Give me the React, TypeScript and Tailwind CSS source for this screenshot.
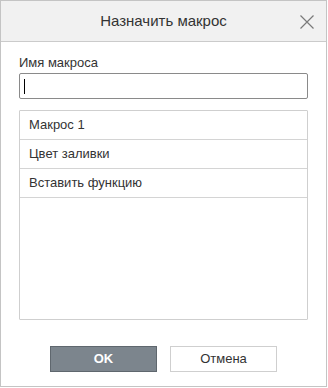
export default function App() {
  const items = ["Макрос 1", "Цвет заливки", "Вставить функцию"];
  return (
    <div className="w-[328px] h-[388px] bg-white font-['Liberation_Sans',Arial,sans-serif] text-[#333]">
      <div className="flex h-[387px] w-[327px] flex-col border border-[#c4c4c4]">
        <div className="relative flex h-[41px] shrink-0 items-center justify-center border-b border-[#cbcbcb] bg-[#f1f1f1]">
          <span className="text-[15px] text-[#333]">Назначить макрос</span>
          <svg
            className="absolute left-[298px] top-[13px]"
            width="16"
            height="16"
            viewBox="0 0 16 16"
            fill="none"
            stroke="#7a7a7a"
            strokeWidth="1.2"
          >
            <path d="M1.5 1.5 L14.5 14.5 M14.5 1.5 L1.5 14.5" />
          </svg>
        </div>
        <div className="flex flex-1 flex-col px-[18px] pt-[13px]">
          <label className="text-[13px] leading-[16px]">Имя макроса</label>
          <div className="mt-[2px] flex h-[26px] items-center rounded-[2px] border border-[#8a8a8a] px-[4px]">
            <span className="h-[15px] w-px bg-black" />
          </div>
          <div className="mt-[11px] flex h-[210px] flex-col rounded-[1px] border border-[#cfcfcf]">
            {items.map((t) => (
              <div
                key={t}
                className="flex h-[29px] items-center border-b border-[#d4d4d4] pl-[9px] text-[13px]"
              >
                {t}
              </div>
            ))}
          </div>
          <div className="mt-[26px] flex gap-[13px] pl-[31px]">
            <button className="h-[26px] w-[107px] border border-[#5f676e] bg-[#7c858d] text-[13px] font-bold text-white">
              OK
            </button>
            <button className="h-[26px] w-[107px] border border-[#cfcfcf] bg-white text-[13px] text-[#333]">
              Отмена
            </button>
          </div>
        </div>
      </div>
    </div>
  );
}
